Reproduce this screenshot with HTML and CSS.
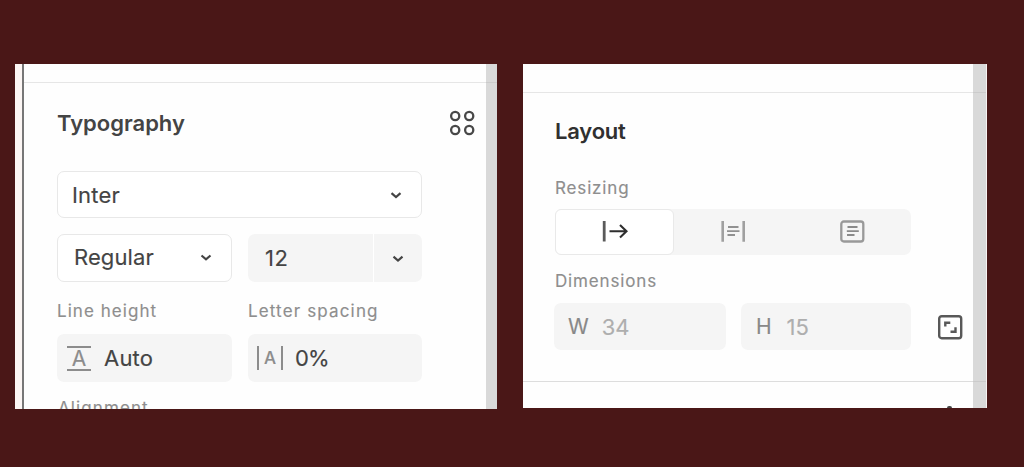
FILE: index.html
```html
<!DOCTYPE html>
<html lang="en">
<head>
<meta charset="utf-8">
<title>Design panels</title>
<link rel="stylesheet" href="styles.css">
</head>
<body>
<main class="stage">
  <section class="panel typography">
    <div class="edge"></div>
    <div class="content">
      <div class="top-rule"></div>
      <header class="panel-head">
        <h2 class="title">Typography</h2>
        <svg class="grid-icon" width="26" height="26" viewBox="0 0 26 26" fill="none" stroke="#484848" stroke-width="2.300"><circle cx="6.200" cy="6" r="4.100"/><circle cx="20.200" cy="6" r="4.100"/><circle cx="6.200" cy="20" r="4.100"/><circle cx="20.200" cy="20" r="4.100"/></svg>
      </header>
      <div class="field outlined family"><span>Inter</span>
        <svg class="chev" width="12" height="8" viewBox="0 0 12 8"><path d="M1.500 2.200 6 6l4.500-3.800"/></svg>
      </div>
      <div class="row style-row">
        <div class="field outlined style"><span class="style-name">Regular</span>
          <svg class="chev" width="12" height="8" viewBox="0 0 12 8"><path d="M1.500 1.500 6 5.300l4.500-3.800"/></svg>
        </div>
        <div class="field size"><span class="size-value">12</span>
          <span class="size-menu"><svg class="chev" width="12" height="8" viewBox="0 0 12 8"><path d="M1.500 2.700 6 6.500l4.500-3.800"/></svg></span>
        </div>
      </div>
      <div class="row label-row">
        <span class="label line-label">Line height</span>
        <span class="label spacing-label">Letter spacing</span>
      </div>
      <div class="row">
        <div class="field metric"><span class="glyph line-glyph">A</span><span>Auto</span></div>
        <div class="field metric tight"><span class="glyph letter-glyph">A</span><span class="percent">0%</span></div>
      </div>
      <div class="label align-label">Alignment</div>
    </div>
    <div class="scroll"><div class="scroll-rule"></div></div>
  </section>

  <section class="panel layout">
    <div class="content">
      <div class="top-rule"></div>
      <h2 class="title layout-title">Layout</h2>
      <div class="label resizing-label">Resizing</div>
      <div class="segments">
        <div class="segment active">
          <svg width="26" height="24" viewBox="0 0 26 24" fill="none"><path d="M2.200 1v20.500" stroke="#5a5a5a" stroke-width="2.800"/><path d="M7.500 11.300h17M18 5l6.500 6.300-6.500 6.300" stroke="#2e2e2e" stroke-width="2.100"/></svg>
        </div>
        <div class="segment">
          <svg width="26" height="24" viewBox="0 0 26 24" fill="none" stroke="#919191" stroke-width="1.800"><path d="M2.700 1v20.800M23.700 1v20.800" stroke="#a0a0a0" stroke-width="2.600"/><path d="M8 7h10.500M7 11.200h12.500M7.500 15H15"/></svg>
        </div>
        <div class="segment">
          <svg width="26" height="24" viewBox="0 0 26 24" fill="none" stroke="#8a8a8a" stroke-width="1.800"><rect x="2.300" y="1.500" width="22" height="20" rx="2.500" stroke="#999" stroke-width="2.300"/><path d="M8.500 7h10M7.800 11.200h12M8 15h7.500"/></svg>
        </div>
      </div>
      <div class="label dimensions-label">Dimensions</div>
      <div class="dims">
        <div class="field dim"><span class="dim-key">W</span><span>34</span></div>
        <div class="field dim dim-h"><span class="dim-key">H</span><span>15</span></div>
        <svg class="fit" width="26" height="26" viewBox="0 0 26 26" fill="none" stroke="#585858" stroke-width="2.400"><rect x="2.200" y="2.200" width="22" height="22" rx="2.500"/><path d="M8.300 12.500V8.800h5M18.500 13.300v4.500h-5"/></svg>
      </div>
      <div class="bottom"><span class="plus-tip"></span></div>
    </div>
    <div class="scroll"><div class="scroll-rule"></div><div class="scroll-rule lower"></div></div>
  </section>
</main>
</body>
</html>
```
FILE: styles.css
```css
* { box-sizing: border-box; }
body { margin: 0; background: #4a1717; font-family: Inter, "Liberation Sans", sans-serif; }
.stage { display: flex; align-items: flex-start; gap: 26px; height: 467px; padding: 64px 0 0 15px; overflow: hidden; }
.panel { display: flex; overflow: hidden; background: #fefefe; }
.typography { width: 482px; height: 345px; }
.layout { width: 464px; height: 344px; border-right: 1px solid #f7f2f2; }
.edge { flex: none; width: 9px; background: #fcf6f4; border-right: 2px solid #777; }
.content { flex: 1; min-width: 0; }
.top-rule { height: 19px; border-bottom: 1px solid #e6e6e6; }
.layout .top-rule { height: 29px; }
.scroll { flex: none; width: 11px; background: #d9d9d9; }
.layout .scroll { width: 13px; }
.scroll-rule { height: 19px; border-bottom: 1px solid #cbcbcb; }
.layout .scroll-rule { height: 29px; }
.layout .scroll-rule.lower { height: 289px; }

.title { margin: 0; font-size: 22px; line-height: 28px; font-weight: 600; color: #303030; white-space: nowrap; }
.panel-head { display: flex; justify-content: space-between; align-items: center; height: 80px; padding: 0 11px 0 33px; }
.typography .title { color: #444; }
.field { display: flex; align-items: center; height: 48px; border-radius: 7px; background: #f5f5f5; font-size: 22px; line-height: 28px; color: #444; white-space: nowrap; -webkit-text-stroke: .15px currentColor; }
.outlined { justify-content: space-between; background: #fff; border: 1px solid #e8e8e8; }
.chev { fill: none; stroke: #444; stroke-width: 2.200; }
.typography .content > .family { width: 365px; height: 47px; margin: 8px 0 0 33px; padding: 0 19px 0 14px; letter-spacing: .2px; }
.row { display: flex; gap: 16px; margin-left: 33px; }
.style-row { margin-top: 16px; }
.row > .field, .row > .label { width: 175px; }
.row > .size, .row > .tight { width: 174px; }
.style { padding: 0 19px 0 16px; }
.style-name { padding-bottom: 2px; letter-spacing: .1px; }
.size-value { width: 126px; height: 48px; padding: 10px 0 0 17px; border-right: 1px solid #fff; letter-spacing: .5px; }
.size-menu { flex: 1; display: flex; justify-content: center; }
.label { display: block; height: 24px; font-size: 17px; line-height: 24px; letter-spacing: .85px; color: #8e8e8e; white-space: nowrap; -webkit-text-stroke: .15px currentColor; }
.line-label { letter-spacing: 1.05px; }
.spacing-label { letter-spacing: 1.15px; }
.label-row { margin: 17px 0 11px 33px; }
.metric { padding-left: 10px; gap: 13px; letter-spacing: .2px; }
.metric.tight { padding-left: 9px; gap: 12px; }
.percent { letter-spacing: -.8px; }
.glyph { color: #8c8c8c; text-align: center; letter-spacing: 0; }
.line-glyph { width: 24px; height: 25px; border: solid #8c8c8c; border-width: 2px 0; font-size: 21px; line-height: 21px; }
.letter-glyph { width: 26px; height: 24px; border: solid #8c8c8c; border-width: 0 2px; font-size: 17px; font-weight: 500; line-height: 24px; }
.align-label { margin: 14px 0 0 34px; letter-spacing: 1.1px; }

.layout-title { margin: 24px 0 0 32px; letter-spacing: -.2px; }
.resizing-label { margin: 31px 0 0 32px; }
.segments { display: flex; width: 356px; height: 46px; margin: 9px 0 0 32px; border-radius: 7px; background: #f5f5f5; }
.segment { flex: 1; display: flex; align-items: center; justify-content: center; }
.segment.active { flex: none; width: 119px; background: #fff; border: 1px solid #e9e9e9; border-radius: 6px; }
.dimensions-label { margin: 14px 0 0 32px; }
.dims { display: flex; align-items: center; margin: 10px 0 0 31px; }
.dim { width: 172px; height: 47px; padding-left: 14px; gap: 13px; color: #aeaeae; }
.dim-h { width: 170px; margin-left: 15px; padding-left: 15px; gap: 15px; }
.dim-key { color: #888; font-size: 21px; }
.fit { margin-left: 26px; }
.bottom { display: flex; justify-content: flex-end; align-items: flex-end; height: 27px; margin-top: 31px; padding-right: 21px; border-top: 1px solid #ddd; }
.plus-tip { width: 5px; height: 2px; border-radius: 2px 2px 0 0; background: #444; }
```
